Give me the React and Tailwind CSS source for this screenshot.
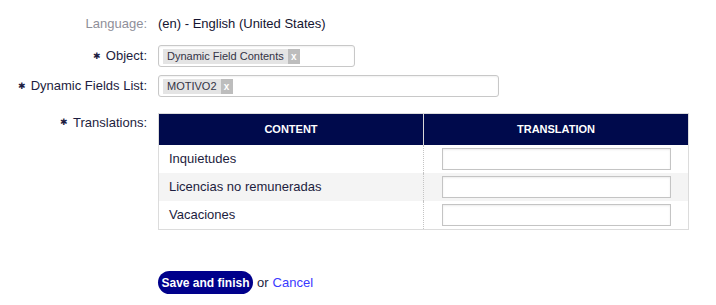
export default function App() {
  const rows = ['Inquietudes', 'Licencias no remuneradas', 'Vacaciones'];

  return (
    <div className="min-h-screen bg-white pt-[14px] font-['Liberation_Sans',Arial,sans-serif] text-[13px] text-[#1d1d40]">
      <div className="flex h-[20px] items-center">
        <div className="w-[147px] text-right text-[#8f8f9a]">Language:</div>
        <div className="ml-[11px] text-[#141430]">(en) - English (United States)</div>
      </div>

      <div className="mt-[11px] flex items-center">
        <Label text="Object:" />
        <div className="ml-[11px] flex h-[22px] w-[197px] items-center rounded-[3px] border border-[#c8c8c8] bg-white px-[4px] shadow-[inset_0_1px_2px_rgba(0,0,0,0.06)]">
          <Tag text="Dynamic Field Contents" />
        </div>
      </div>

      <div className="mt-[8px] flex items-center">
        <Label text="Dynamic Fields List:" />
        <div className="ml-[11px] flex h-[22px] w-[341px] items-center rounded-[3px] border border-[#c8c8c8] bg-white px-[4px] shadow-[inset_0_1px_2px_rgba(0,0,0,0.06)]">
          <Tag text="MOTIVO2" />
        </div>
      </div>

      <div className="mt-[16px] flex items-start">
        <Label text="Translations:" />
        <div className="ml-[11px] w-[531px] border border-[#dcdcdc]">
          <div className="flex h-[31px] bg-[#000a4c] text-[11px] font-bold text-white">
            <div className="flex w-[264px] items-center justify-center">CONTENT</div>
            <div className="flex flex-1 items-center justify-center border-l border-[#d8d8d8]">TRANSLATION</div>
          </div>
          {rows.map((r, i) => (
            <div key={r} className={`flex h-[28px] ${i === 1 ? 'bg-[#f4f4f4]' : 'bg-white'}`}>
              <div className="flex w-[264px] items-center pl-[10px]">{r}</div>
              <div className="flex flex-1 items-center border-l border-dotted border-[#c4c4c4] pl-[18px]">
                <input className="h-[22px] w-[229px] border border-[#c4c4c4] bg-white shadow-[inset_0_1px_2px_rgba(0,0,0,0.08)] outline-none" />
              </div>
            </div>
          ))}
        </div>
      </div>

      <div className="mt-[41px] flex items-center pl-[158px]">
        <button className="h-[23px] w-[95px] rounded-full bg-[#00008b] text-[12px] font-bold text-white">
          Save and finish
        </button>
        <span className="ml-[4px]">or</span>
        <a href="#" className="ml-[4px] text-[#3a3aff]">Cancel</a>
      </div>
    </div>
  );
}

function Label({ text }) {
  return (
    <div className="flex w-[147px] items-center justify-end">
      <span className="mr-[5px] text-[9px] leading-none">✱</span>
      <span>{text}</span>
    </div>
  );
}

function Tag({ text }) {
  return (
    <span className="flex h-[15px] items-center bg-[#e4e4e4] text-[11px] text-[#333344]">
      <span className="px-[4px]">{text}</span>
      <span className="flex h-full w-[12px] items-center justify-center bg-[#bdbdbd] text-[10px] font-bold text-white">x</span>
    </span>
  );
}
